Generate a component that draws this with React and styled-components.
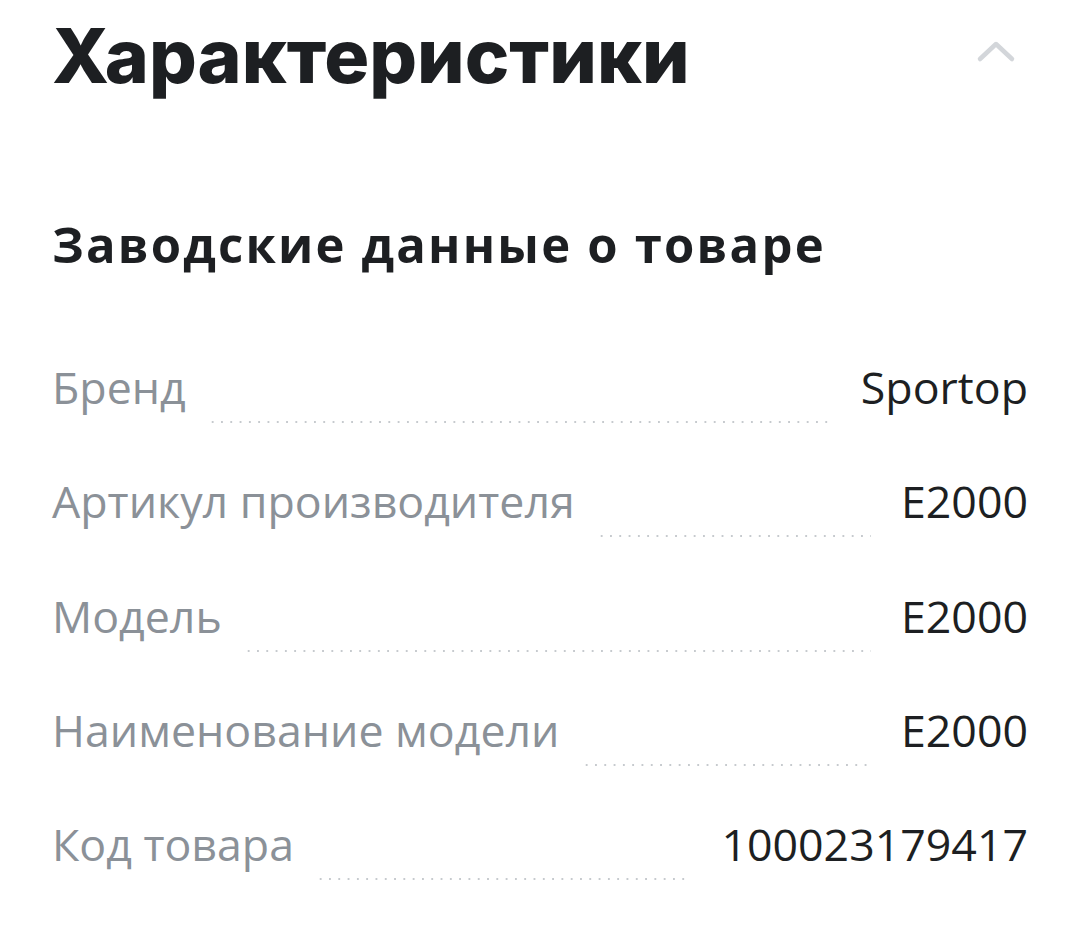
import React from "react";
import styled, { createGlobalStyle } from "styled-components";

const Global = createGlobalStyle`
  html, body { margin: 0; padding: 0; background: #ffffff; }
  body { font-family: "Open Sans", "Noto Sans", sans-serif; -webkit-font-smoothing: antialiased; }
`;

const Page = styled.div`
  width: 1080px;
  height: 941px;
  box-sizing: border-box;
  padding: 12px 52px 0 52px;
  background: #fff;
`;

const Header = styled.div`
  display: flex;
  align-items: center;
  justify-content: space-between;
`;

const Title = styled.h1`
  margin: 0;
  font-family: Inter, "Noto Sans", sans-serif;
  font-weight: 800;
  font-size: 75px;
  line-height: 88px;
  color: #1d1f22;
`;

const Chevron = styled.svg`
  width: 40px;
  height: 24px;
  margin-right: 12px;
  margin-top: -10px;
`;

const Subtitle = styled.h2`
  margin: 114px 0 0 0;
  font-family: "Open Sans", "Noto Sans", sans-serif;
  font-weight: 700;
  font-size: 49px;
  line-height: 60px;
  letter-spacing: 2.2px;
  color: #1d1f22;
`;

const List = styled.div`
  margin-top: 83px;
  display: flex;
  flex-direction: column;
  gap: 54.3px;
`;

const Row = styled.div`
  display: flex;
  align-items: baseline;
  height: 60px;
  font-size: 44.7px;
  line-height: 60px;
`;

const Label = styled.span`
  color: #8b9198;
  white-space: nowrap;
`;

const Dots = styled.span`
  flex: 1;
  margin: 0 30px -6px 22px;
  height: 2px;
  align-self: flex-end;
  background-image: radial-gradient(circle, #c6cace 0.9px, transparent 1.2px);
  background-size: 9.3px 2px;
  background-repeat: repeat-x;
`;

const Value = styled.span`
  color: #1d1f22;
  white-space: nowrap;
`;

const rows = [
  ["Бренд", "Sportop"],
  ["Артикул производителя", "E2000"],
  ["Модель", "E2000"],
  ["Наименование модели", "E2000"],
  ["Код товара", "100023179417"],
];

export default function App() {
  return (
    <Page>
      <Global />
      <Header>
        <Title>Характеристики</Title>
        <Chevron viewBox="0 0 40 24" fill="none">
          <path d="M4 20 L20 5 L36 20" stroke="#d3d6da" strokeWidth="4.5" strokeLinecap="round" strokeLinejoin="round" />
        </Chevron>
      </Header>
      <Subtitle>Заводские данные о товаре</Subtitle>
      <List>
        {rows.map(([k, v]) => (
          <Row key={k}>
            <Label>{k}</Label>
            <Dots />
            <Value>{v}</Value>
          </Row>
        ))}
      </List>
    </Page>
  );
}
